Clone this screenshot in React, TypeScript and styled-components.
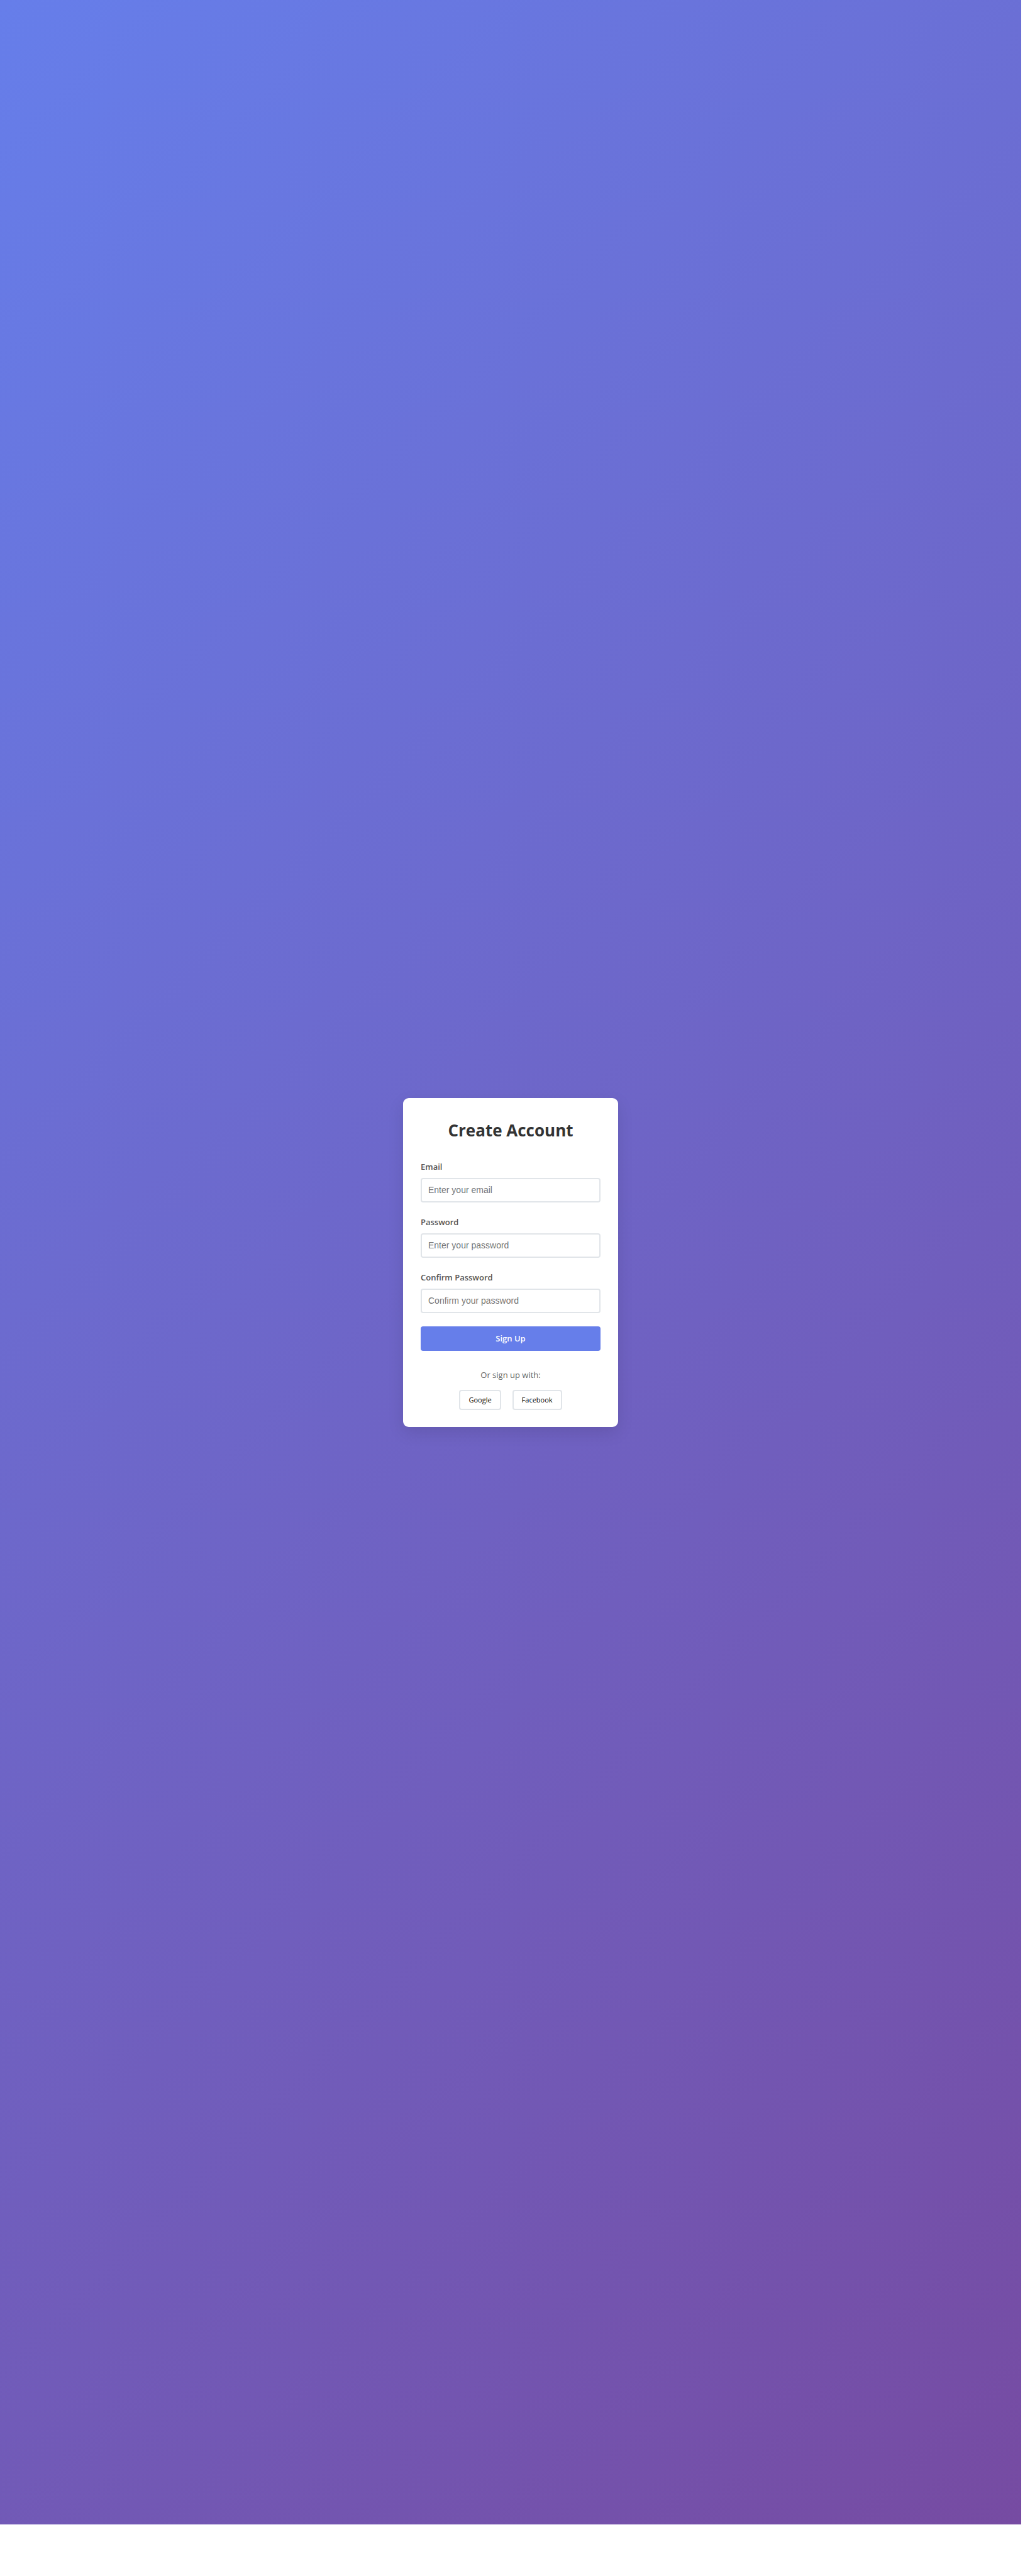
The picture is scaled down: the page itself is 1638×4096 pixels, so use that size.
import React from "react";
import styled, { createGlobalStyle } from "styled-components";

const GlobalStyle = createGlobalStyle`
  *, *::before, *::after { box-sizing: border-box; }
  body {
    margin: 0;
    background: #ffffff;
    font-family: "Open Sans", "Noto Sans", sans-serif;
  }
`;

const Page = styled.div`
  display: flex;
  min-height: 100vh;
  padding: 0 14px 82px 0;
`;

const Backdrop = styled.main`
  flex: 1;
  display: flex;
  align-items: center;
  justify-content: center;
  background: linear-gradient(135deg, #667eea 0%, #764ba2 100%);
`;

const Card = styled.section`
  width: 100%;
  max-width: 342px;
  padding: 27px 28px;
  border-radius: 9px;
  background: #ffffff;
  box-shadow: 0 9px 26px rgba(0, 0, 0, 0.1);
`;

const Title = styled.h1`
  margin: 0 0 24px;
  color: #333333;
  font-size: 26px;
  font-weight: 700;
  line-height: 48px;
  text-align: center;
`;

const Form = styled.form`
  display: flex;
  flex-direction: column;
  gap: 21px;
`;

const Field = styled.div`
  display: flex;
  flex-direction: column;
  gap: 7px;
`;

const Label = styled.label`
  color: #555555;
  font-size: 13px;
  font-weight: 600;
  line-height: 21px;
`;

const Input = styled.input`
  width: 100%;
  height: 39px;
  padding: 0 10px;
  border: 2px solid #e1e5e9;
  border-radius: 4px;
  background: #ffffff;
  color: #333333;
  font-family: "Liberation Sans", Arial, sans-serif;
  font-size: 14px;

  &::placeholder { color: #757575; }
  &:focus { outline: none; border-color: #667eea; }
`;

const SubmitButton = styled.button`
  height: 39px;
  padding: 0;
  border: 0;
  border-radius: 4px;
  background: #667eea;
  color: #ffffff;
  font-family: inherit;
  font-size: 13px;
  font-weight: 600;
  cursor: pointer;

  &:hover { background: #5a6fd8; }
`;

const Social = styled.div`
  display: flex;
  flex-direction: column;
  gap: 13px;
  margin-top: 28px;
`;

const SocialText = styled.p`
  margin: 0;
  color: #666666;
  font-size: 13px;
  line-height: 21px;
  text-align: center;
`;

const SocialButtons = styled.div`
  display: flex;
  justify-content: center;
  gap: 18px;
`;

const SocialButton = styled.button`
  height: 32px;
  padding: 0 13px;
  border: 2px solid #e1e5e9;
  border-radius: 4px;
  background: #ffffff;
  color: #000000;
  font-family: inherit;
  font-size: 11px;
  cursor: pointer;

  &:hover { border-color: #667eea; }
`;

const fields = [
  { id: "email", type: "email", label: "Email", placeholder: "Enter your email" },
  { id: "password", type: "password", label: "Password", placeholder: "Enter your password" },
  { id: "confirm", type: "password", label: "Confirm Password", placeholder: "Confirm your password" },
];

const providers = ["Google", "Facebook"];

export default function App() {
  const handleSubmit = (event: React.FormEvent<HTMLFormElement>) => event.preventDefault();

  return (
    <>
      <GlobalStyle />
      <Page>
        <Backdrop>
          <Card>
            <Title>Create Account</Title>
            <Form onSubmit={handleSubmit}>
              {fields.map((field) => (
                <Field key={field.id}>
                  <Label htmlFor={field.id}>{field.label}</Label>
                  <Input id={field.id} type={field.type} placeholder={field.placeholder} />
                </Field>
              ))}
              <SubmitButton type="submit">Sign Up</SubmitButton>
            </Form>
            <Social>
              <SocialText>Or sign up with:</SocialText>
              <SocialButtons>
                {providers.map((name) => (
                  <SocialButton key={name} type="button">{name}</SocialButton>
                ))}
              </SocialButtons>
            </Social>
          </Card>
        </Backdrop>
      </Page>
    </>
  );
}
